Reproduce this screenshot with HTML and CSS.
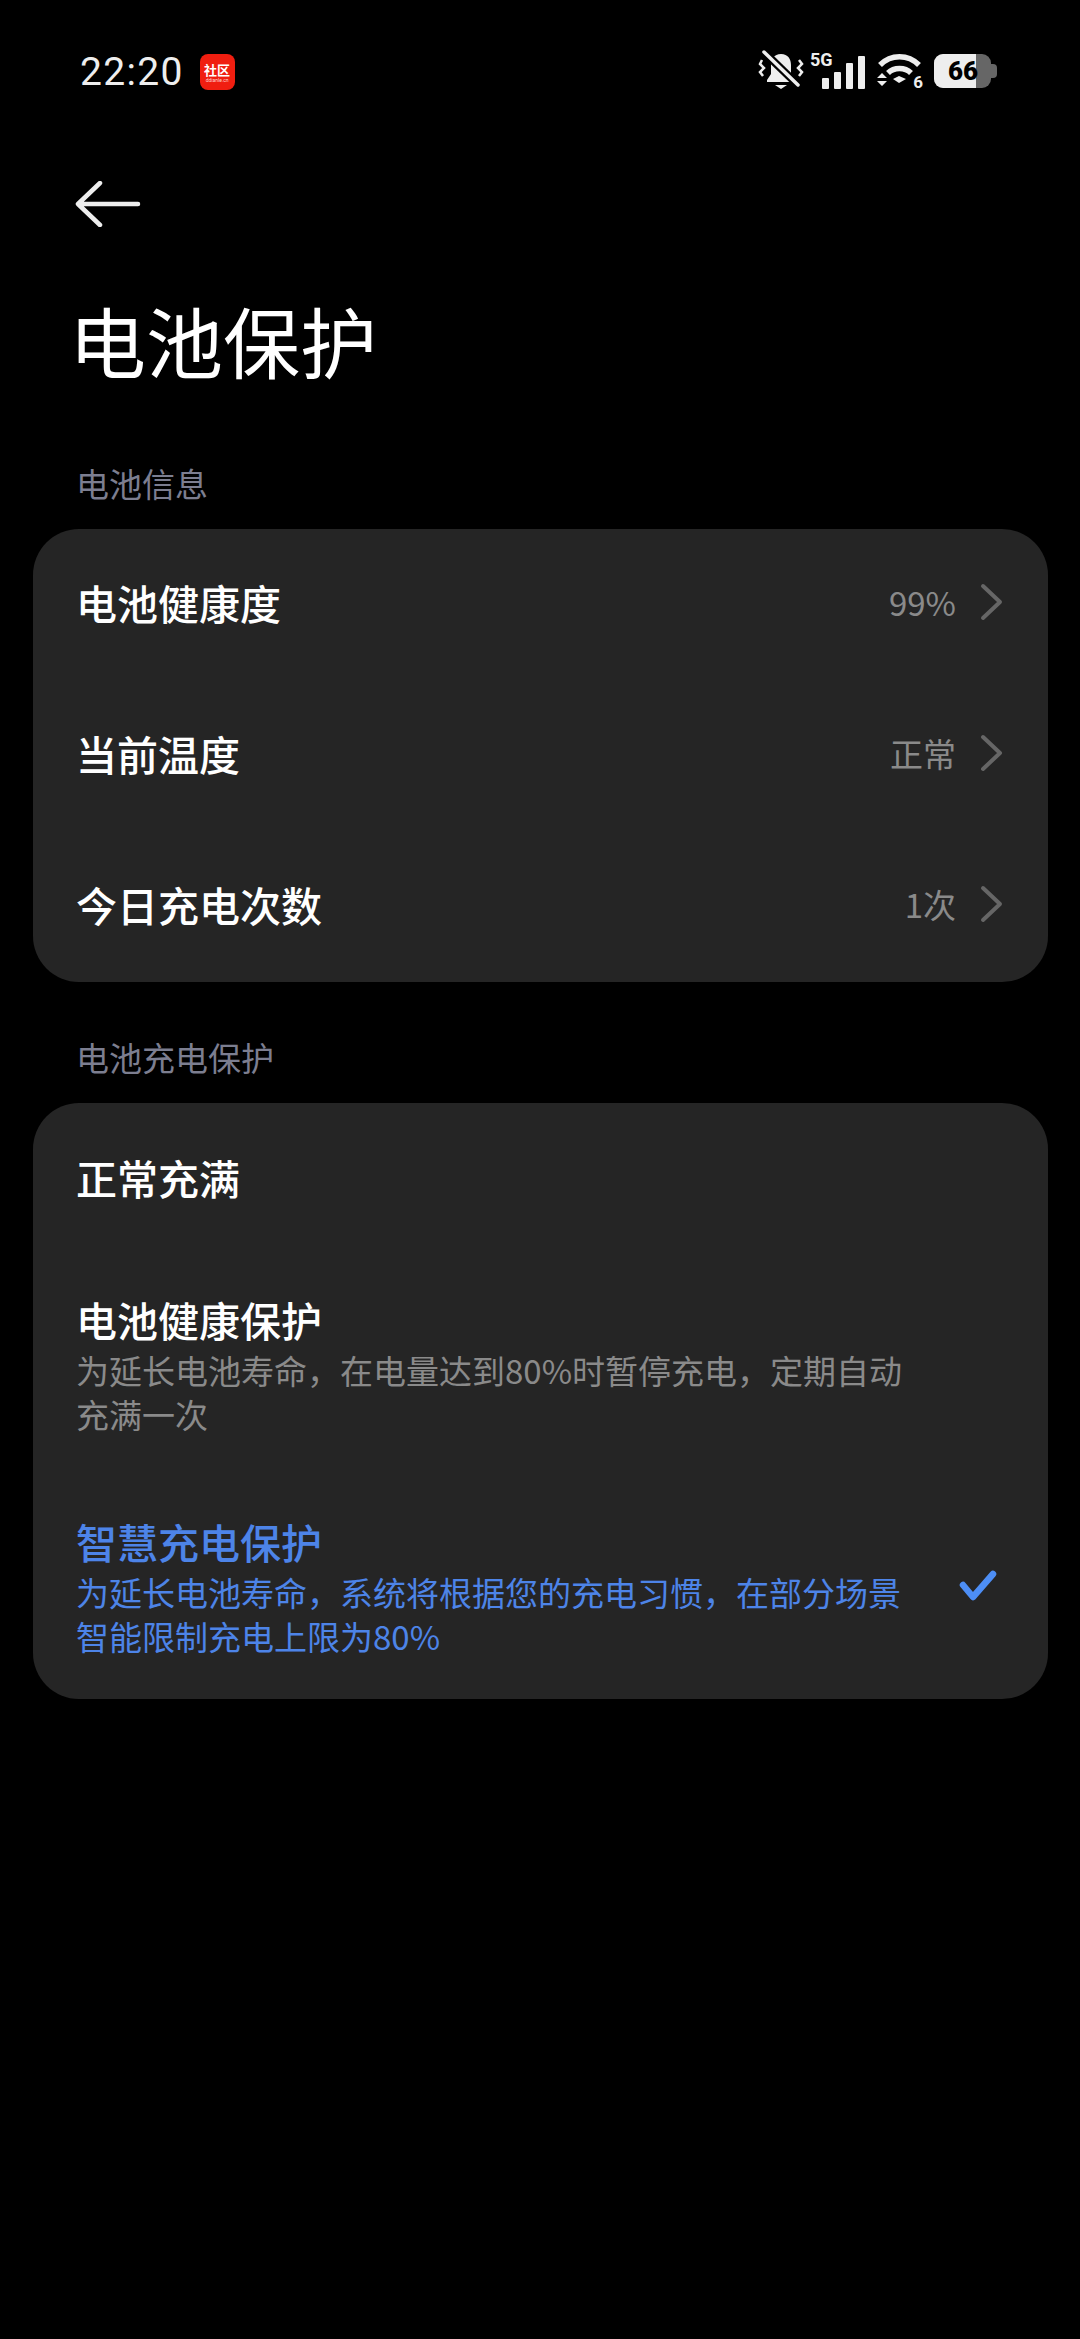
FILE: index.html
```html
<!DOCTYPE html>
<html lang="zh-CN">
  <head>
    <meta charset="UTF-8" />
    <title>电池保护</title>
    <link rel="stylesheet" href="styles.css">
  </head>
  <body>
    <div class="status-bar">
      <div class="status-left">
        <span class="time">22:20</span>
        <div class="app-badge">
          <span class="app-badge-name">社区</span>
          <span class="app-badge-url">ddianle.cn</span>
        </div>
      </div>
      <div class="status-right">
        <svg class="icon-bell" viewBox="0 0 46 42">
          <path d="M23 4c-7 0-10 5-10 11v9l-4 6v2h28v-2l-4-6v-9c0-6-3-11-10-11z" fill="#eee" />
          <path d="M17 35h12l-6 4z" fill="#eee" />
          <path d="M6 2l34 33" stroke="#000" stroke-width="8" />
          <path d="M6 2l34 33" stroke="#eee" stroke-width="3.5" stroke-linecap="round" />
          <path d="M4 10l-2 4 4 4-4 4 3 4M41 10l3 4-4 4 4 4-3 4" fill="none" stroke="#eee" stroke-width="2.5" />
        </svg>
        <div class="signal">
          <span class="signal-label">5G</span>
          <div class="signal-bars">
            <i class="bar bar-1"></i>
            <i class="bar bar-2"></i>
            <i class="bar bar-3"></i>
            <i class="bar bar-4"></i>
          </div>
        </div>
        <div class="wifi">
          <svg class="icon-wifi" viewBox="0 0 46 34">
            <path d="M3 11C14 0 31 0 42 11" fill="none" stroke="#eee" stroke-width="5.5" />
            <path d="M11 19C17 13 28 13 34 19" fill="none" stroke="#eee" stroke-width="5.5" />
            <path d="M16 25l6-3 7 3-7 4z" fill="#eee" />
            <path d="M0 24l5-5 5 5zM0 27h10l-5 5z" fill="#eee" />
          </svg>
          <span class="wifi-label">6</span>
        </div>
        <div class="battery">
          <div class="battery-body">
            <div class="battery-fill"></div>
            <span class="battery-text">66</span>
          </div>
          <div class="battery-cap"></div>
        </div>
      </div>
    </div>

    <div class="nav">
      <svg class="icon-back" viewBox="0 0 66 46">
        <path d="M3 23h60M25 2L3 23l22 21" fill="none" stroke="#eee" stroke-width="4.5" stroke-linecap="round" stroke-linejoin="round" />
      </svg>
    </div>

    <h1 class="page-title">电池保护</h1>

    <div class="section-title first">电池信息</div>
    <div class="card">
      <div class="row">
        <span class="row-name">电池健康度</span>
        <span class="row-value">99%</span>
        <svg class="chevron" viewBox="0 0 24 38"><path d="M3 3l17 16L3 35" /></svg>
      </div>
      <div class="row">
        <span class="row-name">当前温度</span>
        <span class="row-value">正常</span>
        <svg class="chevron" viewBox="0 0 24 38"><path d="M3 3l17 16L3 35" /></svg>
      </div>
      <div class="row">
        <span class="row-name">今日充电次数</span>
        <span class="row-value">1次</span>
        <svg class="chevron" viewBox="0 0 24 38"><path d="M3 3l17 16L3 35" /></svg>
      </div>
    </div>

    <div class="section-title">电池充电保护</div>
    <div class="card">
      <div class="option option-plain">
        <div class="option-name">正常充满</div>
      </div>
      <div class="option option-health">
        <div class="option-name">电池健康保护</div>
        <div class="option-desc">为延长电池寿命，在电量达到80%时暂停充电，定期自动<br>充满一次</div>
      </div>
      <div class="option option-smart selected">
        <div class="option-body">
          <div class="option-name">智慧充电保护</div>
          <div class="option-desc">为延长电池寿命，系统将根据您的充电习惯，在部分场景<br>智能限制充电上限为80%</div>
        </div>
        <svg class="check" viewBox="0 0 40 34"><path d="M6 16l10 12L36 5" /></svg>
      </div>
    </div>
  </body>
</html>
```

FILE: styles.css
```css
body {
  margin: 0;
  width: 1080px;
  height: 2339px;
  overflow: hidden;
  background-color: #000;
  color: #fff;
  font-family: "Noto Sans CJK SC", "Noto Sans", sans-serif;
}
.status-bar {
  height: 144px;
  box-sizing: border-box;
  padding: 0 83px 0 80px;
  display: flex;
  align-items: center;
  justify-content: space-between;
}
.status-left {
  display: flex;
  align-items: center;
  gap: 16px;
}
.time {
  font-family: Roboto, sans-serif;
  font-size: 39px;
  letter-spacing: 1.3px;
  color: #eee;
}
.app-badge {
  width: 35px;
  height: 36px;
  border-radius: 8px;
  background-color: #f01e10;
  display: flex;
  flex-direction: column;
  align-items: center;
  justify-content: center;
  overflow: hidden;
}
.app-badge-name {
  font-size: 13px;
  line-height: 15px;
  font-weight: 700;
  color: #fff;
}
.app-badge-url {
  font-family: Roboto, sans-serif;
  font-size: 5px;
  line-height: 6px;
  color: #ffd5d0;
}
.status-right {
  display: flex;
  align-items: center;
  gap: 12px;
  margin-top: -2px;
}
.icon-bell {
  width: 46px;
  height: 42px;
  margin-right: -6px;
}
.signal {
  position: relative;
  width: 55px;
  height: 35px;
}
.signal-label {
  position: absolute;
  left: 0;
  top: -3px;
  font-family: Roboto, sans-serif;
  font-size: 18px;
  line-height: 18px;
  font-weight: 700;
  color: #eee;
}
.signal-bars {
  height: 100%;
  display: flex;
  align-items: flex-end;
  justify-content: flex-end;
  gap: 5px;
}
.bar {
  width: 7px;
  background-color: #eee;
  border-radius: 1px;
}
.bar-1 { height: 11px; }
.bar-2 { height: 17px; }
.bar-3 { height: 26px; }
.bar-4 { height: 33px; }
.wifi {
  position: relative;
  width: 45px;
  height: 34px;
}
.icon-wifi {
  width: 46px;
  height: 34px;
}
.wifi-label {
  position: absolute;
  right: -1px;
  bottom: -1px;
  font-family: Roboto, sans-serif;
  font-size: 17px;
  line-height: 14px;
  font-weight: 700;
  color: #eee;
}
.battery {
  display: flex;
  align-items: center;
}
.battery-body {
  position: relative;
  width: 57px;
  height: 34px;
  background-color: #666;
  border-radius: 9px;
  overflow: hidden;
}
.battery-fill {
  width: 42px;
  height: 100%;
  background-color: #eee;
}
.battery-text {
  position: absolute;
  left: 14px;
  top: 0;
  font-family: Roboto, sans-serif;
  font-size: 26px;
  line-height: 34px;
  font-weight: 900;
  color: #000;
}
.battery-cap {
  width: 6px;
  height: 14px;
  background-color: #666;
  border-radius: 0 4px 4px 0;
}
.nav {
  margin-top: 29px;
  padding-left: 75px;
  height: 62px;
  display: flex;
  align-items: center;
}
.icon-back {
  width: 66px;
  height: 46px;
}
.page-title {
  margin: 0;
  padding-left: 69px;
  font-size: 77px;
  line-height: 104px;
  font-weight: 400;
  margin-top: 53px;
}
.section-title {
  padding-left: 76px;
  font-size: 33px;
  line-height: 46px;
  color: #7c7e90;
  margin-top: 52px;
  margin-bottom: 23px;
}
.section-title.first {
  margin-top: 68px;
}
.card {
  margin: 0 32px 0 33px;
  background-color: #252525;
  border-radius: 46px;
}
.row {
  height: 151px;
  box-sizing: border-box;
  padding: 0 44px 5px 43px;
  display: flex;
  align-items: center;
}
.row-name {
  flex: 1;
  font-size: 41px;
  font-weight: 500;
}
.row-value {
  font-size: 33px;
  color: #8a8a8a;
  margin-right: 24px;
}
.chevron {
  width: 24px;
  height: 38px;
}
.chevron path {
  fill: none;
  stroke: #666;
  stroke-width: 4;
  stroke-linecap: round;
  stroke-linejoin: round;
}
.option {
  padding: 0 44px 0 43px;
}
.option-name {
  font-size: 41px;
  line-height: 56px;
  font-weight: 500;
}
.option-desc {
  font-size: 33px;
  line-height: 44px;
  margin-top: 1px;
  color: #8a8a8a;
}
.option-plain {
  padding-top: 46px;
  padding-bottom: 53px;
}
.option-health {
  padding-top: 33px;
  padding-bottom: 44px;
}
.option-smart {
  padding-top: 33px;
  padding-bottom: 41px;
  display: flex;
  align-items: center;
  justify-content: space-between;
}
.selected .option-name,
.selected .option-desc {
  color: #4d84e8;
}
.check {
  width: 40px;
  height: 34px;
  margin-right: 7px;
}
.check path {
  fill: none;
  stroke: #4d8ef5;
  stroke-width: 6.5;
  stroke-linecap: round;
  stroke-linejoin: round;
}
```
